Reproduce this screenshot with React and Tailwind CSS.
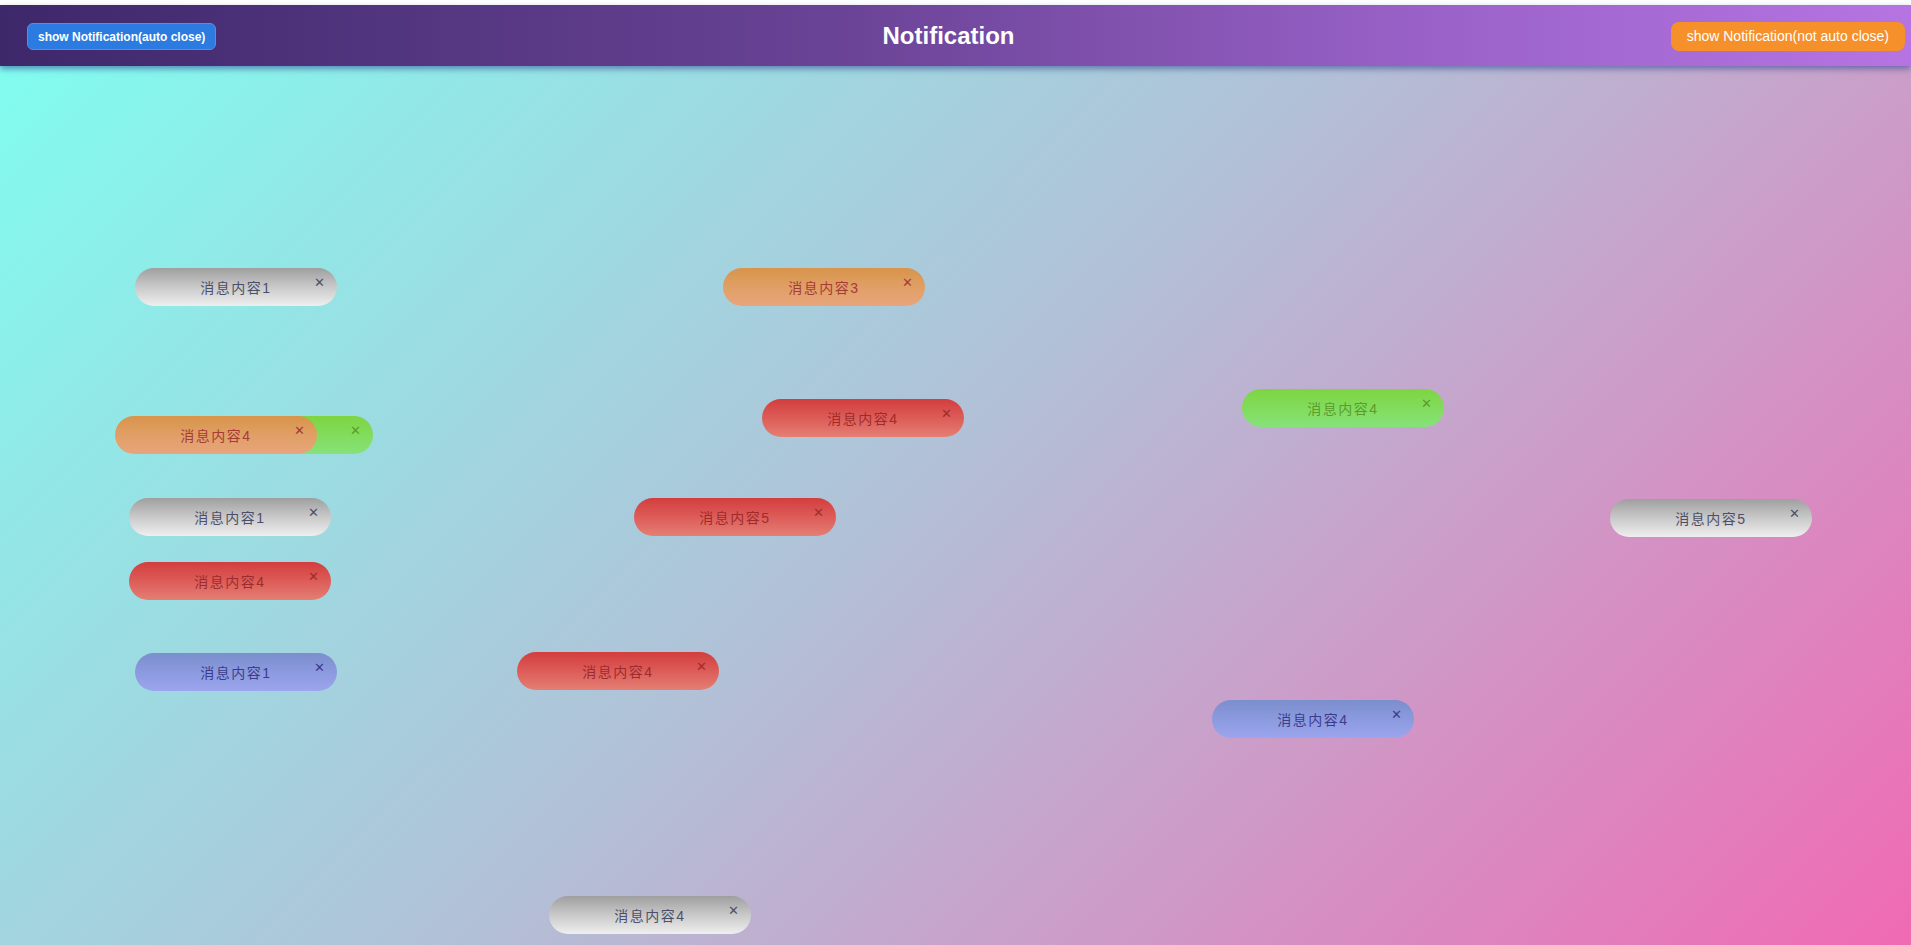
import React from "react";

const styles = {
  gray: { box: "bg-[linear-gradient(180deg,#9f9f9f_0%,#c9c9c9_50%,#efefef_100%)]", text: "text-[#4d4f6a]", x: "text-[#4d4f6a]" },
  orange: { box: "bg-[linear-gradient(180deg,#d8944a_0%,#e09f66_50%,#e8a57c_100%)]", text: "text-[#a83a3a]", x: "text-[#a83a3a]" },
  red: { box: "bg-[linear-gradient(180deg,#d23e3e_0%,#dd5c58_50%,#e47f74_100%)]", text: "text-[#9e2c2c]", x: "text-[#9e2c2c]" },
  green: { box: "bg-[linear-gradient(180deg,#7dd542_0%,#82dc5c_50%,#86e27a_100%)]", text: "text-[#5c9b2c]", x: "text-[#5c9b2c]" },
  blue: { box: "bg-[linear-gradient(180deg,#7b8ecd_0%,#8b9ade_50%,#9ca5ee_100%)]", text: "text-[#3c3c8c]", x: "text-[#3c3c8c]" },
};

const toasts = [
  { t: "gray", label: "消息内容1", x: 135, y: 268 },
  { t: "orange", label: "消息内容3", x: 723, y: 268 },
  { t: "red", label: "消息内容4", x: 762, y: 399 },
  { t: "green", label: "消息内容4", x: 1242, y: 389 },
  { t: "green", label: "消息内容4", x: 171, y: 416 },
  { t: "orange", label: "消息内容4", x: 115, y: 416 },
  { t: "gray", label: "消息内容1", x: 129, y: 498 },
  { t: "red", label: "消息内容5", x: 634, y: 498 },
  { t: "gray", label: "消息内容5", x: 1610, y: 499 },
  { t: "red", label: "消息内容4", x: 129, y: 562 },
  { t: "blue", label: "消息内容1", x: 135, y: 653 },
  { t: "red", label: "消息内容4", x: 517, y: 652 },
  { t: "blue", label: "消息内容4", x: 1212, y: 700 },
  { t: "gray", label: "消息内容4", x: 549, y: 896 },
];

function Toast({ t, label, x, y }) {
  const s = styles[t];
  return (
    <div
      className={`absolute w-[202px] h-[38px] rounded-[19px] flex items-center justify-center ${s.box}`}
      style={{ left: x, top: y }}
    >
      <span
        className={`text-[14px] tracking-[1.5px] leading-none mt-[2px] ${s.text}`}
        style={{ fontFamily: '"Liberation Sans", "Noto Sans CJK SC", sans-serif' }}
      >
        {label}
      </span>
      <span
        className={`absolute right-[12px] top-[8px] text-[13px] font-bold leading-none ${s.x}`}
        style={{ fontFamily: '"DejaVu Sans", sans-serif' }}
      >
        ✕
      </span>
    </div>
  );
}

export default function App() {
  return (
    <div
      className="w-full h-[945px] flex flex-col bg-white overflow-hidden"
      style={{ fontFamily: '"Liberation Sans", Arial, sans-serif' }}
    >
      <div className="h-[5px] bg-white shrink-0" />
      <div className="flex-1 flex flex-col relative bg-[linear-gradient(135deg,#7ffff0_0%,#b3bfd6_50%,#f06ab3_100%)]">
        <header className="h-[61px] shrink-0 flex items-center justify-between pl-[27px] pr-[6px] bg-[linear-gradient(90deg,#3d286a_0%,#6b4497_45%,#9a62c9_75%,#b574e2_100%)] shadow-[0_3px_6px_rgba(40,60,140,0.55)] relative z-10">
          <button className="h-[27px] px-[10px] rounded-[6px] bg-[#2b7be0] text-white text-[12px] font-semibold mt-[2px] border border-[#5a8fd8]">
            show Notification(auto close)
          </button>
          <h1 className="text-white text-[24px] font-bold ml-[10px]">Notification</h1>
          <button className="h-[29px] px-[16px] rounded-[8px] bg-[#f5902a] text-white text-[14px] mt-[2px]">
            show Notification(not auto close)
          </button>
        </header>
        <main className="flex-1 relative">
          {toasts.map((d, i) => (
            <Toast key={i} {...d} y={d.y - 66} />
          ))}
        </main>
      </div>
    </div>
  );
}
